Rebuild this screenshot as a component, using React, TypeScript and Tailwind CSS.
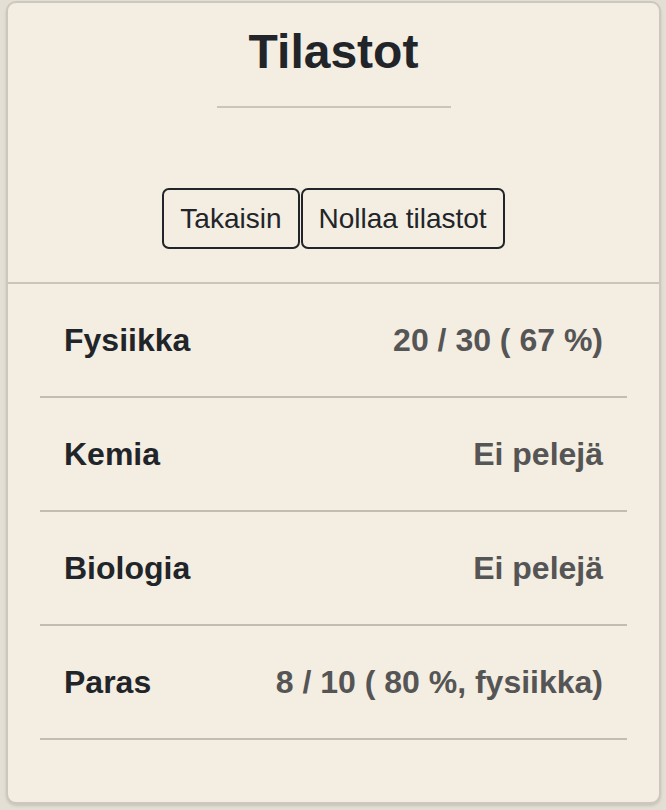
import React from "react";

const rows: { label: string; value: string }[] = [
  { label: "Fysiikka", value: "20 / 30 ( 67 %)" },
  { label: "Kemia", value: "Ei pelejä" },
  { label: "Biologia", value: "Ei pelejä" },
  { label: "Paras", value: "8 / 10 ( 80 %, fysiikka)" },
];

export default function App() {
  return (
    <div
      className="min-h-[810px] w-[666px] bg-[#e4dfd4] pl-[6px] pr-[5px] pt-[1px]"
      style={{ fontFamily: '"Liberation Sans", Arial, Helvetica, sans-serif' }}
    >
      <div className="rounded-[10px] border-2 border-[#cdc8bd] bg-[#f4ede1] pb-[62px] shadow-[0_2px_3px_rgba(0,0,0,0.12)]">
        <div className="flex flex-col items-center pt-[25px]">
          <h1 className="text-[48px] font-bold leading-[48px] text-[#212529]">Tilastot</h1>
          <div className="mt-[30px] h-[2px] w-[234px] bg-[#cac5ba]" />
          <div className="mt-[80px] flex gap-[1px]">
            <button className="flex h-[61px] items-center rounded-[7px] border-2 border-[#212529] px-4 text-[28px] leading-none text-[#212529]">
              Takaisin
            </button>
            <button className="flex h-[61px] items-center rounded-[7px] border-2 border-[#212529] px-4 text-[28px] leading-none text-[#212529]">
              Nollaa tilastot
            </button>
          </div>
        </div>
        <div className="mt-[33px] h-[2px] w-full bg-[#cac5ba]" />
        <div className="mx-8">
          {rows.map((r) => (
            <div
              key={r.label}
              className="flex h-[114px] items-center justify-between border-b-2 border-[#c2bdb3] px-6"
            >
              <span className="text-[32px] font-bold text-[#212529]">{r.label}</span>
              <span className="text-[32px] font-bold text-[#555555]">{r.value}</span>
            </div>
          ))}
        </div>
      </div>
    </div>
  );
}
